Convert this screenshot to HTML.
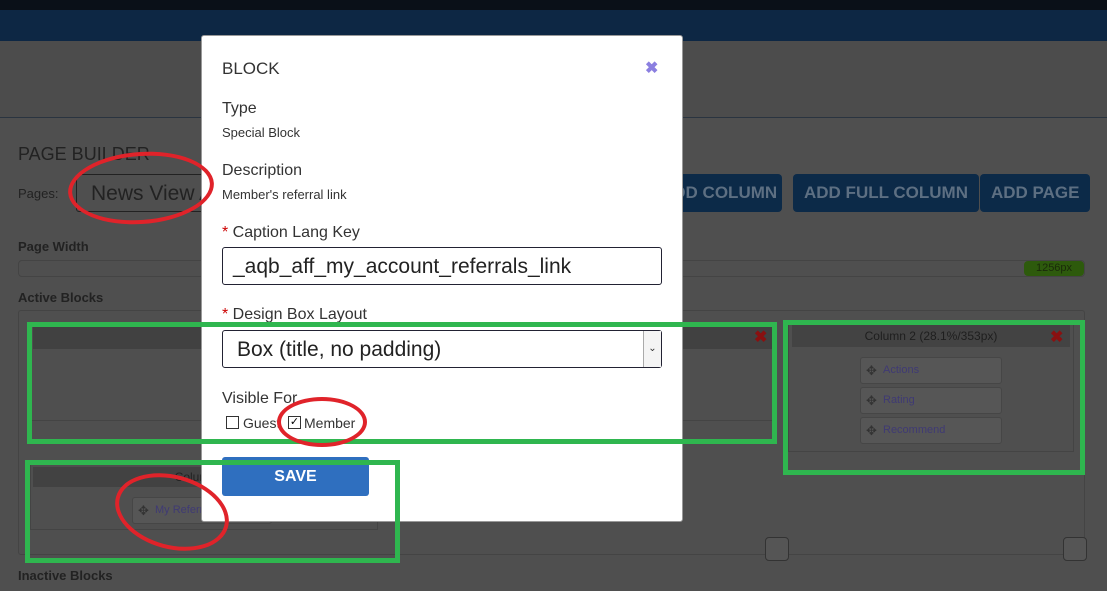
<!DOCTYPE html>
<html style="background:#4f4f4f"><head><style>
*{box-sizing:border-box;margin:0;padding:0}
html,body{background:#4f4f4f}
body{width:1107px;height:591px;overflow:hidden;font-family:"Liberation Sans",sans-serif;position:relative;white-space:nowrap}
.a{position:absolute}
.btn{background:#0c2a48;color:#5d6f82;font-weight:bold;font-size:17px;border-radius:4px;height:38px;line-height:38px;padding:0 11px;font-family:"Liberation Sans",sans-serif;overflow:hidden}
.g{border:5px solid #2fb64f}
.r{border:4px solid #e0232a;border-radius:50%}
.blk{background:#565656;border:1px solid #464646;border-radius:3px;height:27px;color:#3f3a74;font-size:11px;line-height:25px;padding-left:22px}
.blk:before{content:"✥";position:absolute;left:5px;color:#333;font-size:13px}
.x{color:#8a1010;font-weight:bold;font-size:16px}
.m{color:#333;}
</style></head><body style="background:#4f4f4f">
<div class="a" style="left:0;top:0;width:1107px;height:591px;background:#4f4f4f"></div>
<div class="a" style="left:0;top:0;width:1107px;height:10px;background:#0a1018"></div>
<div class="a" style="left:0;top:10px;width:1107px;height:31px;background:#0d2744"></div>
<div class="a" style="left:0;top:41px;width:1107px;height:77px;background:#4c4c4c;border-bottom:1px solid #2a3440"></div>
<div class="a" style="left:18px;top:144px;font-size:18px;color:#222">PAGE BUILDER</div>
<div class="a" style="left:18px;top:186px;font-size:13px;color:#222">Pages:</div>
<div class="a" style="left:76px;top:174px;width:140px;height:38px;border:1px solid #222;border-radius:3px;font-size:21px;color:#222;padding:7px 14px;overflow:hidden">News View A</div>
<div class="a btn" style="left:650px;top:174px;width:132px;text-align:right">ADD COLUMN</div>
<div class="a btn" style="left:793px;top:174px">ADD FULL COLUMN</div>
<div class="a btn" style="left:980px;top:174px">ADD PAGE</div>
<div class="a" style="left:18px;top:239px;font-size:13px;font-weight:bold;color:#222">Page Width</div>
<div class="a" style="left:18px;top:260px;width:1067px;height:17px;border:1px solid #444;border-radius:4px"></div>
<div class="a" style="left:1024px;top:261px;width:60px;height:15px;background:#2d5a0c;border-radius:4px;font-size:11px;color:#1a2a0a;text-align:center;line-height:15px">1256px</div>
<div class="a" style="left:18px;top:290px;font-size:13px;font-weight:bold;color:#222">Active Blocks</div>
<div class="a" style="left:18px;top:310px;width:1067px;height:245px;border:1px solid #444;border-radius:3px"></div>
<div class="a" style="left:33px;top:327px;width:740px;height:22px;background:#414141"></div>
<div class="a x" style="left:754px;top:327px">✖</div>
<div class="a" style="left:30px;top:420px;width:745px;height:1px;background:#444"></div>
<div class="a" style="left:788px;top:320px;width:286px;height:132px;border:1px solid #444"></div>
<div class="a" style="left:792px;top:325px;width:278px;height:22px;background:#434343;font-size:12px;color:#1e1e1e;text-align:center;line-height:22px">Column 2 (28.1%/353px)</div>
<div class="a x" style="left:1050px;top:327px">✖</div>
<div class="a blk" style="left:860px;top:357px;width:142px">Actions</div>
<div class="a blk" style="left:860px;top:387px;width:142px">Rating</div>
<div class="a blk" style="left:860px;top:417px;width:142px">Recommend</div>
<div class="a" style="left:30px;top:460px;width:348px;height:70px;border:1px solid #444"></div>
<div class="a" style="left:33px;top:467px;width:342px;height:20px;background:#424242;font-size:12px;color:#222;text-align:center;line-height:20px">Column 3 (</div>
<div class="a blk" style="left:132px;top:497px;width:140px">My Referrals</div>
<div class="a" style="left:765px;top:537px;width:24px;height:24px;background:#555;border:1px solid #333;border-radius:4px"></div>
<div class="a" style="left:1063px;top:537px;width:24px;height:24px;background:#555;border:1px solid #333;border-radius:4px"></div>
<div class="a" style="left:18px;top:568px;font-size:13px;font-weight:bold;color:#222">Inactive Blocks</div>

<div class="a" style="left:201px;top:35px;width:482px;height:487px;background:#fff;border:1px solid #999;border-radius:3px"></div>
<div class="a m" style="left:222px;top:59px;font-size:17px">BLOCK</div>
<div class="a" style="left:645px;top:58px;font-size:16px;color:#8b7fe0;font-weight:bold">✖</div>
<div class="a m" style="left:222px;top:100px;font-size:16px">Type</div>
<div class="a m" style="left:222px;top:125px;font-size:13px">Special Block</div>
<div class="a m" style="left:222px;top:162px;font-size:16px">Description</div>
<div class="a m" style="left:222px;top:187px;font-size:13px">Member's referral link</div>
<div class="a m" style="left:222px;top:224px;font-size:16px"><span style="color:#c00">*</span> Caption Lang Key</div>
<div class="a" style="left:222px;top:247px;width:440px;height:38px;border:1px solid #223;border-radius:3px;font-size:21px;color:#222;padding:7px 10px">_aqb_aff_my_account_referrals_link</div>
<div class="a m" style="left:222px;top:306px;font-size:16px"><span style="color:#c00">*</span> Design Box Layout</div>
<div class="a" style="left:222px;top:330px;width:440px;height:38px;border:1px solid #223;border-radius:3px;font-size:21px;color:#222;padding:7px 14px">Box (title, no padding)</div>
<div class="a" style="left:643px;top:331px;width:18px;height:36px;border-left:1px solid #aaa;background:#f4f4f4;font-size:10px;text-align:center;line-height:36px;color:#333">⌄</div>
<div class="a m" style="left:222px;top:390px;font-size:16px">Visible For</div>
<div class="a" style="left:226px;top:416px;width:13px;height:13px;border:1px solid #333"></div>
<div class="a m" style="left:243px;top:415px;font-size:14px">Guest</div>
<div class="a" style="left:288px;top:416px;width:13px;height:13px;border:1px solid #333;font-size:11px;line-height:11px;text-align:center">✓</div>
<div class="a m" style="left:304px;top:415px;font-size:14px">Member</div>
<div class="a" style="left:222px;top:457px;width:147px;height:39px;background:#2f6fbf;border-radius:3px;color:#fff;font-weight:bold;font-size:16px;text-align:center;line-height:39px">SAVE</div>

<div class="a g" style="left:27px;top:322px;width:750px;height:122px"></div>
<div class="a g" style="left:783px;top:320px;width:302px;height:155px"></div>
<div class="a g" style="left:25px;top:460px;width:375px;height:103px"></div>
<div class="a r" style="left:68px;top:152px;width:146px;height:72px;transform:rotate(-4deg)"></div>
<div class="a r" style="left:277px;top:397px;width:90px;height:50px"></div>
<div class="a r" style="left:114px;top:475px;width:116px;height:74px;transform:rotate(15deg)"></div>
</body></html>
